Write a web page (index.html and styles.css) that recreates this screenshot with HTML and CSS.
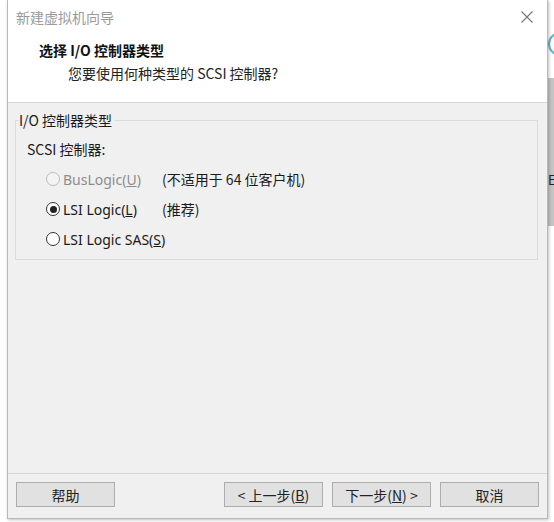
FILE: index.html
```html
<!DOCTYPE html>
<html lang="zh-CN">
<head>
<meta charset="utf-8">
<link rel="stylesheet" href="styles.css">
</head>
<body>
<div class="desktop">
  <div class="window">
    <div class="top">
      <div class="titlebar">
        <span class="title">新建虚拟机向导</span>
        <svg class="close" width="12" height="12" viewBox="0 0 12 12"><path d="M0.5 0.5 L11.5 11.5 M11.5 0.5 L0.5 11.5" stroke="#777" stroke-width="1.1" fill="none"/></svg>
      </div>
      <div class="header">
        <div class="h-title">选择 I/O 控制器类型</div>
        <div class="h-sub">您要使用何种类型的 SCSI 控制器?</div>
      </div>
    </div>
    <div class="body">
      <fieldset class="group">
        <legend>I/O 控制器类型</legend>
        <div class="scsi">SCSI 控制器:</div>
        <div class="opts">
          <div class="opt disabled">
            <span class="radio"></span><span class="lbl">BusLogic(<u>U</u>)</span><span class="note">(不适用于 64 位客户机)</span>
          </div>
          <div class="opt">
            <span class="radio on"></span><span class="lbl">LSI Logic(<u>L</u>)</span><span class="note">(推荐)</span>
          </div>
          <div class="opt">
            <span class="radio"></span><span class="lbl">LSI Logic SAS(<u>S</u>)</span>
          </div>
        </div>
      </fieldset>
    </div>
    <div class="footer">
      <button class="btn">帮助</button>
      <div class="spacer"></div>
      <button class="btn">&lt; 上一步(<u>B</u>)</button>
      <button class="btn">下一步(<u>N</u>) &gt;</button>
      <button class="btn cancel">取消</button>
    </div>
  </div>
  <div class="behind">
    <div class="arc"></div>
    <div class="strip"><span class="glyph">E</span></div>
  </div>
</div>
</body>
</html>
```

FILE: styles.css
```css
html, body {
  margin: 0;
  padding: 0;
  background: #ffffff;
}
body {
  font-family: "Noto Sans CJK SC", "Microsoft YaHei", "Noto Sans", sans-serif;
  font-size: 14px;
  color: #1a1a1a;
}
.desktop {
  position: relative;
  width: 554px;
  height: 522px;
  overflow: hidden;
  display: flex;
  padding-left: 7px;
  box-sizing: border-box;
}
.window {
  width: 541px;
  height: 519px;
  box-sizing: border-box;
  border: 1px solid #b9b9b9;
  border-top: none;
  background: #f0f0f0;
  display: flex;
  flex-direction: column;
  box-shadow: 1px 1px 3px rgba(0,0,0,0.25);
  position: relative;
  z-index: 2;
}
.top {
  background: #ffffff;
  border-bottom: 1px solid #d6d6d6;
  height: 103px;
  box-sizing: border-box;
}
.titlebar {
  height: 34px;
  display: flex;
  align-items: center;
  justify-content: space-between;
  padding: 0 14px 0 8px;
}
.title {
  color: #9a9a9a;
  font-size: 14px;
}
.close {
  display: block;
}
.header {
  padding-left: 31px;
}
.h-title {
  font-weight: bold;
  font-size: 14px;
  line-height: 18px;
  margin-top: 7px;
  color: #111;
}
.h-sub {
  padding-left: 29px;
  line-height: 18px;
  margin-top: 5px;
  color: #222;
}
.body {
  flex: 1;
  padding: 8px 9px 0 7px;
}
.group {
  margin: 0;
  border: 1px solid #dcdcdc;
  padding: 0 0 6px 0;
  height: 149px;
  box-sizing: border-box;
}
.group legend {
  padding: 0 2px 0 0;
  margin-left: 3px;
  line-height: 18px;
  color: #1a1a1a;
}
.scsi {
  padding-left: 11px;
  margin-top: 11px;
  line-height: 18px;
}
.opts {
  margin-top: 12px;
  padding-left: 30px;
  display: flex;
  flex-direction: column;
  gap: 12px;
}
.opt {
  display: flex;
  align-items: center;
  height: 18px;
  white-space: nowrap;
}
.radio {
  width: 14px;
  height: 14px;
  border: 1px solid #333;
  border-radius: 50%;
  box-sizing: border-box;
  background: #fff;
  margin-right: 3px;
  position: relative;
  flex: none;
}
.radio.on::after {
  content: "";
  position: absolute;
  left: 2.5px;
  top: 2.5px;
  width: 7px;
  height: 7px;
  border-radius: 50%;
  background: #222;
}
.lbl {
  min-width: 99px;
  flex: none;
  white-space: nowrap;
  font-family: "Noto Sans", "Noto Sans CJK SC", sans-serif;
}
.note {
  color: #1a1a1a;
  white-space: nowrap;
}
.opt.disabled .radio {
  border-color: #bcbcbc;
  background: #f4f4f4;
}
.opt.disabled .lbl {
  color: #8d8d8d;
}
.footer {
  height: 45px;
  border-top: 1px solid #d6d6d6;
  display: flex;
  align-items: flex-start;
  padding: 8px 8px 0 8px;
  box-sizing: border-box;
  gap: 9px;
}
.spacer {
  flex: 1;
}
.btn {
  width: 99px;
  height: 25px;
  background: #e1e1e1;
  border: 1px solid #adadad;
  font-family: "Noto Sans CJK SC", "Noto Sans", sans-serif;
  font-size: 14px;
  color: #222;
  padding: 0;
  margin: 0;
}
.behind {
  position: absolute;
  left: 548px;
  top: 0;
  width: 6px;
  height: 522px;
  z-index: 1;
}
.arc {
  position: absolute;
  left: 0;
  top: 32px;
  width: 20px;
  height: 20px;
  border: 2px solid #5fb4cf;
  border-radius: 50%;
}
.strip {
  position: absolute;
  left: 0;
  top: 78px;
  width: 6px;
  height: 148px;
  background: #c4c4c4;
  overflow: hidden;
}
.glyph {
  position: absolute;
  left: 0;
  top: 94px;
  font-size: 13px;
  line-height: 16px;
  color: #222;
}
```
